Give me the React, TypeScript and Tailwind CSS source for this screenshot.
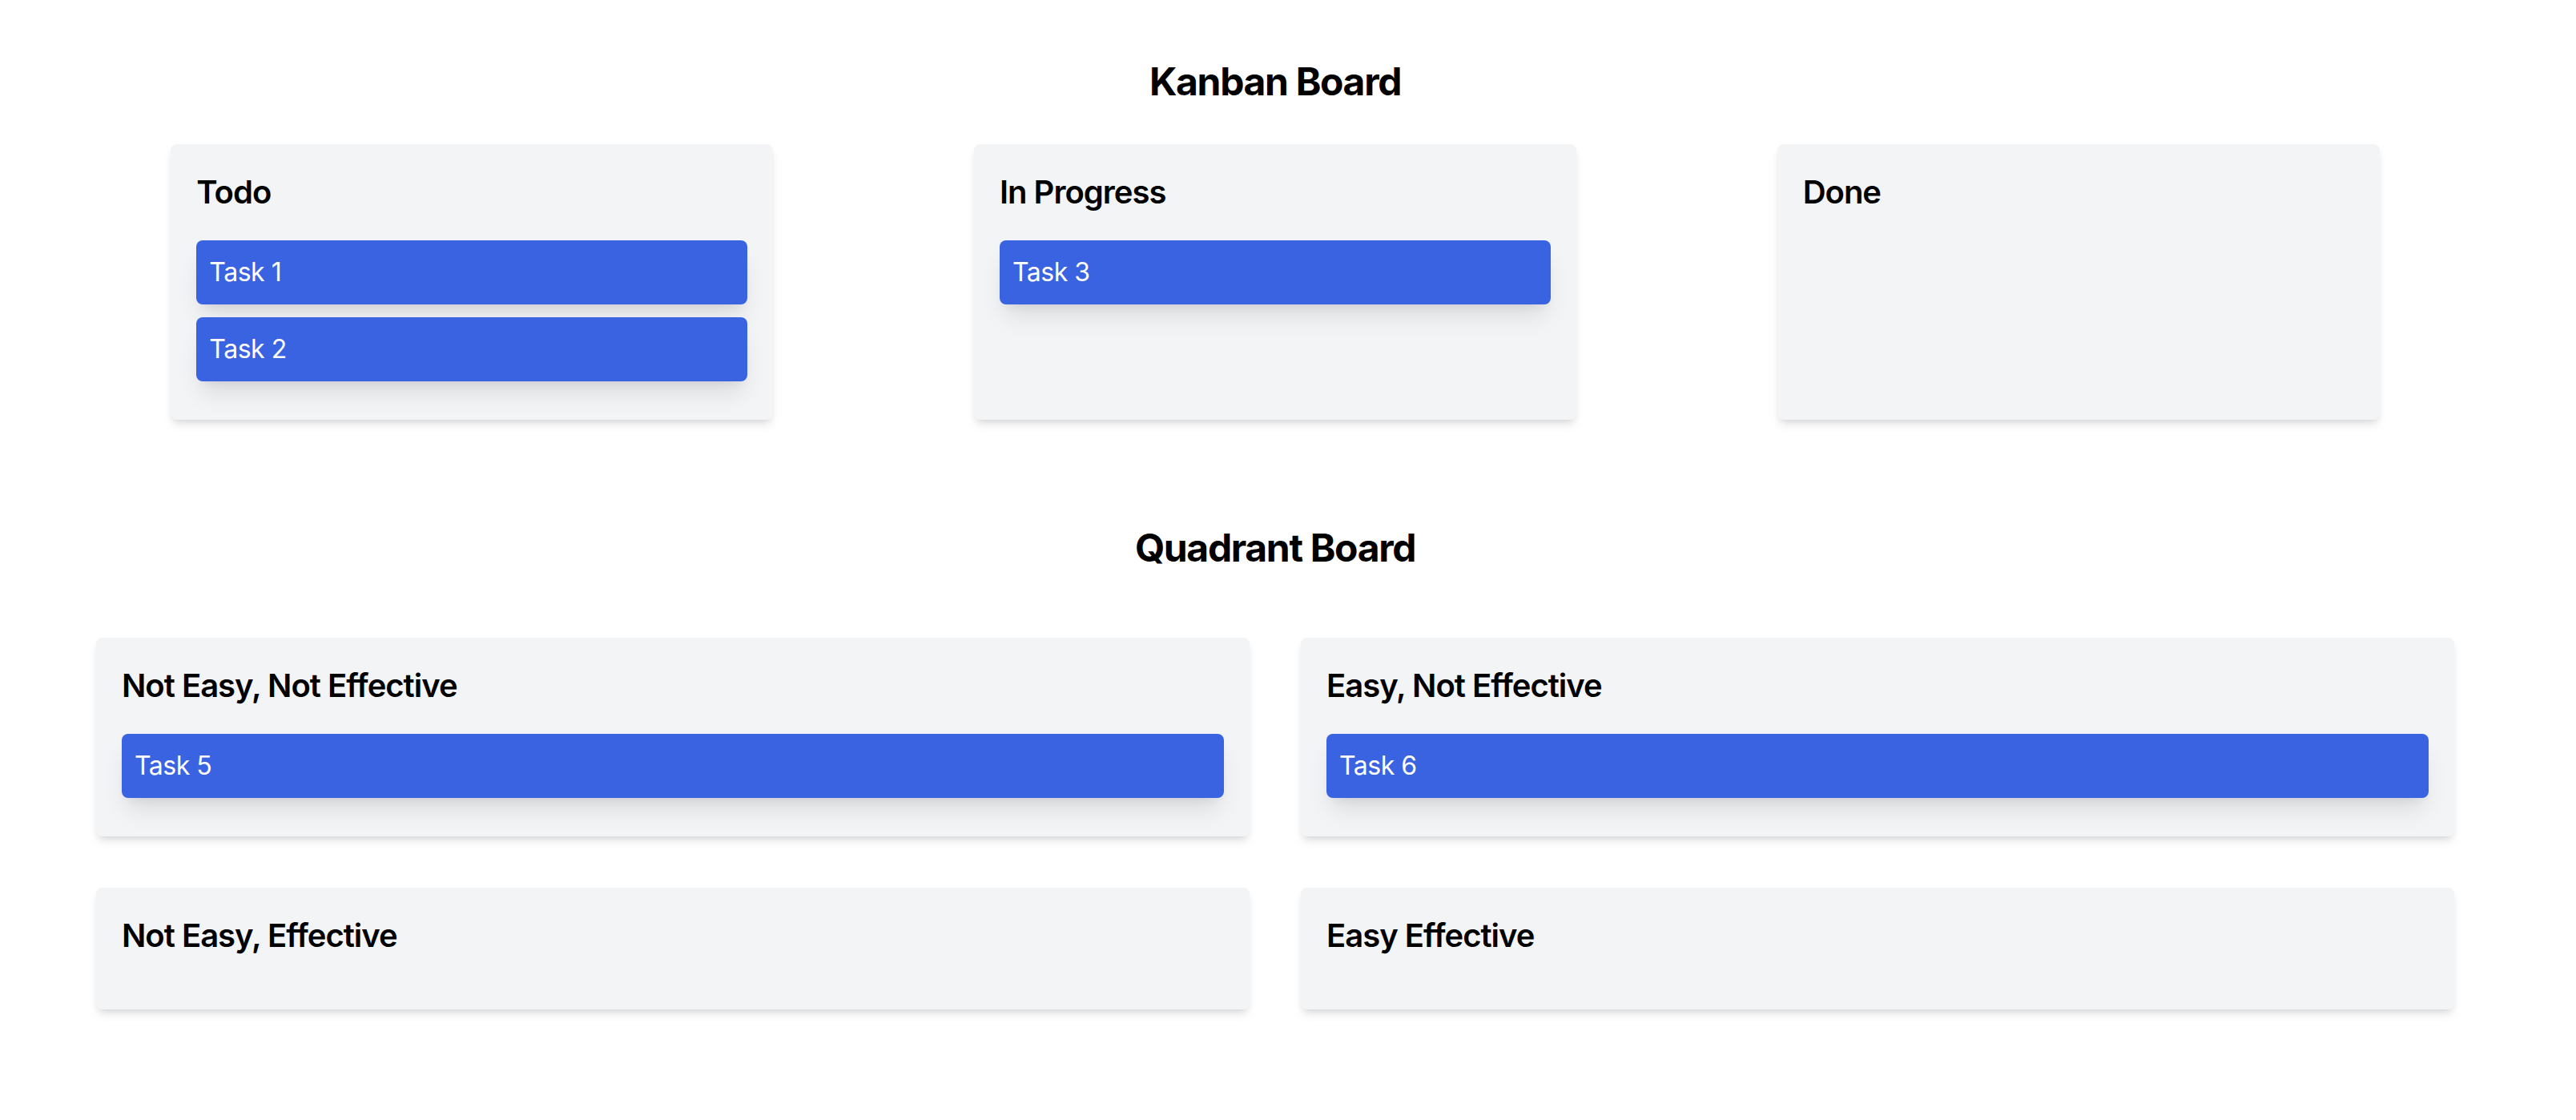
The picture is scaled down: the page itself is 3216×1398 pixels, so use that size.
import React from "react";

type Col = { title: string; tasks: string[] };

const kanban: Col[] = [
  { title: "Todo", tasks: ["Task 1", "Task 2"] },
  { title: "In Progress", tasks: ["Task 3"] },
  { title: "Done", tasks: [] },
];

const quadrants: Col[] = [
  { title: "Not Easy, Not Effective", tasks: ["Task 5"] },
  { title: "Easy, Not Effective", tasks: ["Task 6"] },
  { title: "Not Easy, Effective", tasks: [] },
  { title: "Easy Effective", tasks: [] },
];

function Card({ col, className }: { col: Col; className?: string }) {
  return (
    <div
      className={
        "rounded-[8px] bg-[#f3f4f6] p-[32px] shadow-[0_8px_12px_-2px_rgba(0,0,0,0.1),0_4px_8px_-4px_rgba(0,0,0,0.1)] " +
        (className ?? "")
      }
    >
      <h3 className="mb-[32px] text-[40px] leading-[56px] font-semibold tracking-[-0.025em] text-black">{col.title}</h3>
      <div>
        {col.tasks.map((t) => (
          <div
            key={t}
            className="mb-[16px] rounded-[8px] bg-[#3a63e2] p-[16px] text-[32px] leading-[48px] tracking-[-0.015em] text-white shadow-[0_20px_30px_-6px_rgba(0,0,0,0.1),0_8px_12px_-8px_rgba(0,0,0,0.1)]"
          >
            {t}
          </div>
        ))}
      </div>
    </div>
  );
}

export default function App() {
  return (
    <div className="min-h-[1398px] w-[3184px] bg-white font-['Inter','Liberation_Sans',sans-serif] text-black">
      <div className="mx-auto max-w-[3072px] p-[32px]">
        <section className="pt-[38px]">
          <h1 className="mb-[46px] text-center text-[48px] leading-[64px] font-bold tracking-[-0.028em]">Kanban Board</h1>
          <div className="flex justify-around">
            {kanban.map((c) => (
              <Card key={c.title} col={c} className="w-1/4" />
            ))}
          </div>
        </section>
        <section className="mt-[64px] pt-[64px]">
          <h2 className="mb-[48px] text-center text-[48px] leading-[64px] font-bold tracking-[-0.028em]">Quadrant Board</h2>
          <div className="grid grid-cols-2 gap-[64px] p-[32px]">
            {quadrants.map((c) => (
              <Card key={c.title} col={c} />
            ))}
          </div>
        </section>
      </div>
    </div>
  );
}
